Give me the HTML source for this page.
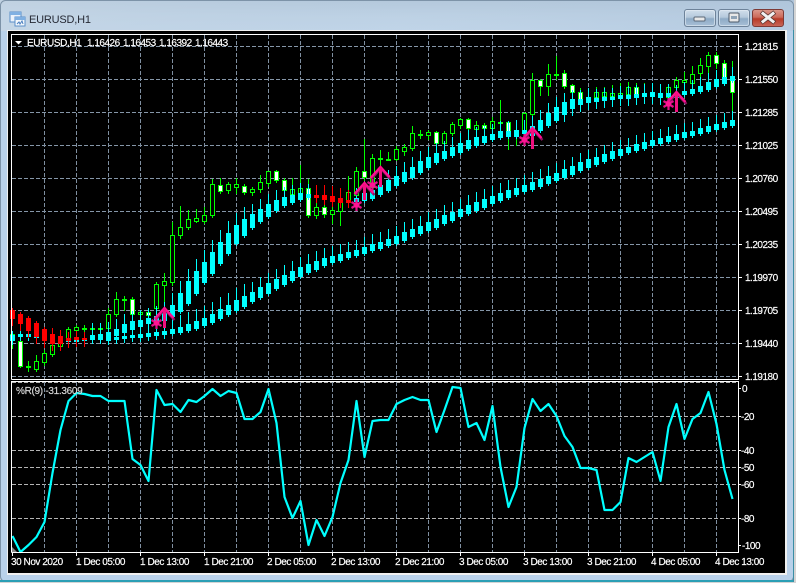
<!DOCTYPE html>
<html><head><meta charset="utf-8"><title>EURUSD,H1</title>
<style>
html,body{margin:0;padding:0;background:#d4d4d4;overflow:hidden}
#w{position:relative;width:796px;height:583px;overflow:hidden}
svg{position:absolute;left:0;top:0}
text{font-family:"Liberation Sans",sans-serif;font-size:10px;fill:#fff;stroke:#fff;stroke-width:.18px;letter-spacing:-.5px}
.t{letter-spacing:-.45px}
.c{shape-rendering:crispEdges}
</style></head><body><div id="w">
<svg width="796" height="583" viewBox="0 0 796 583">
<defs>
<linearGradient id="tb" x1="0" y1="0" x2="0" y2="1"><stop offset="0" stop-color="#b4c8db"/><stop offset=".5" stop-color="#bfd3e6"/><stop offset="1" stop-color="#c3d7eb"/></linearGradient>
<linearGradient id="tb2" x1="0" y1="0" x2="1" y2="0"><stop offset="0" stop-color="#c6d6e5" stop-opacity=".7"/><stop offset=".5" stop-color="#b5cadd" stop-opacity=".2"/><stop offset="1" stop-color="#a9c0d8" stop-opacity=".5"/></linearGradient>
<linearGradient id="bn" x1="0" y1="0" x2="0" y2="1"><stop offset="0" stop-color="#d3e0ec"/><stop offset=".45" stop-color="#b5c9dc"/><stop offset=".55" stop-color="#8fabc6"/><stop offset="1" stop-color="#a9c1d8"/></linearGradient>
<linearGradient id="cl" x1="0" y1="0" x2="0" y2="1"><stop offset="0" stop-color="#dc9a8e"/><stop offset=".45" stop-color="#cc6a5a"/><stop offset=".55" stop-color="#b83a28"/><stop offset="1" stop-color="#c9685a"/></linearGradient>
</defs>
<!-- frame -->
<rect x="0" y="0" width="794" height="582" rx="5" fill="#b9d1ea"/>
<rect x="0" y="0" width="794" height="31" fill="url(#tb)"/>
<rect x="0" y="0" width="794" height="31" fill="url(#tb2)"/>
<rect x=".5" y=".5" width="793" height="581" rx="5" fill="none" stroke="#7d93a8" stroke-width="1"/>
<rect x="0" y="580" width="794" height="2" fill="#2b9fb5"/>
<rect x="793" y="30" width="1" height="552" fill="#3a8ea5"/>
<rect x="7" y="30" width="780" height="545" fill="#f0f0f0"/>
<rect x="8" y="31" width="777" height="542" fill="#000"/>
<!-- icon -->
<g class="c">
<rect x="10" y="12" width="11" height="10" fill="#eaf2fb" stroke="#5b8fc8"/>
<rect x="10" y="12" width="11" height="3" fill="#7fb0e2"/>
<rect x="15" y="17" width="10" height="9" fill="#f4f8fc" stroke="#5b8fc8"/>
<rect x="15" y="17" width="10" height="3" fill="#7fb0e2"/>
</g>
<path d="M17 24l2-2 1 2 2-3 1 3" fill="none" stroke="#4a7fc0" stroke-width="1"/>
<text x="29" y="23" style="font-size:11px;letter-spacing:-.2px;fill:#262a35;stroke:none">EURUSD,H1</text>
<!-- buttons -->
<rect x="684.5" y="9.5" width="31" height="17" rx="2.5" fill="url(#bn)" stroke="#6d8299"/>
<rect x="685.5" y="10.5" width="29" height="15" rx="2" fill="none" stroke="#e4edf5" stroke-opacity=".6"/>
<rect x="694" y="17" width="11" height="4" rx="1" fill="#e8e8e8" stroke="#5c6877" stroke-width="1"/>
<rect x="718.5" y="9.5" width="31" height="17" rx="2.5" fill="url(#bn)" stroke="#6d8299"/>
<rect x="719.5" y="10.5" width="29" height="15" rx="2" fill="none" stroke="#e4edf5" stroke-opacity=".6"/>
<rect x="729" y="13" width="10" height="9" rx="1" fill="#e8e8e8" stroke="#4d5a6a" stroke-width="1"/>
<rect x="731" y="16" width="6" height="3" fill="#8fa3b6"/>
<rect x="752.5" y="9.5" width="31" height="17" rx="2.5" fill="url(#cl)" stroke="#7d3a36"/>
<path d="M763 13.5l10 8M773 13.5l-10 8" stroke="#5a3530" stroke-width="4.5" stroke-linecap="square"/>
<path d="M763 13.5l10 8M773 13.5l-10 8" stroke="#f2f2f2" stroke-width="3" stroke-linecap="square"/>
<!-- grid -->
<g id="grid" class="c" fill="none" stroke-width="1" stroke-dasharray="4 2"></g>
<!-- candles -->
<g id="cs" class="c"></g>
<!-- wpr -->
<polygon points="12,547 17,552 12,552" fill="#8a8a8a"/>
<polyline id="wpr" fill="none" stroke="#00ffff" stroke-width="2.2" stroke-linejoin="round"/>
<!-- arrows -->
<g id="ar"></g>
<!-- frames -->
<g class="c" fill="none" stroke="#fff" stroke-width="1">
<path d="M11.5 379.5V34.5H738.5V379.5H11.5"/>
<path d="M11.5 552.5V381.5H738.5V552.5H11.5"/>
<path d="M738 46.5h4M738 79.5h4M738 112.5h4M738 145.5h4M738 178.5h4M738 211.5h4M738 244.5h4M738 277.5h4M738 310.5h4M738 343.5h4M738 376.5h4"/>
<path d="M738 388.5h3M738 416.5h3M738 450.5h3M738 467.5h3M738 484.5h3M738 518.5h3M738 545.5h3"/>
<path d="M12.5 552v4M76.5 552v4M140.5 552v4M204.5 552v4M268.5 552v4M332.5 552v4M396.5 552v4M460.5 552v4M524.5 552v4M588.5 552v4M652.5 552v4M716.5 552v4"/>
</g>
<polygon points="15,41 22,41 18.5,44.5" fill="#fff"/>
<!-- header -->
<text x="27" y="46" style="letter-spacing:-.38px">EURUSD,H1</text>
<text x="87" y="46">1.16426</text><text x="123" y="46">1.16453</text><text x="159" y="46">1.16392</text><text x="195" y="46">1.16443</text>
<text x="16" y="394" style="fill:#d8d8d8;stroke:#d8d8d8;letter-spacing:-.3px">%R(9) -31.3609</text>
<!-- price axis -->
<text x="745" y="50">1.21815</text><text x="745" y="83">1.21550</text><text x="745" y="116">1.21285</text><text x="745" y="149">1.21025</text><text x="745" y="182">1.20760</text><text x="745" y="215">1.20495</text><text x="745" y="248">1.20235</text><text x="745" y="281">1.19970</text><text x="745" y="314">1.19705</text><text x="745" y="347">1.19440</text><text x="745" y="380">1.19180</text>
<text x="742" y="392">0</text><text x="741" y="420">-20</text><text x="741" y="454">-40</text><text x="741" y="471">-50</text><text x="741" y="488">-60</text><text x="741" y="522">-80</text><text x="742" y="549">-100</text>
<!-- time axis -->
<g class="tm">
<text class="t" x="11" y="565">30 Nov 2020</text>
<text class="t" x="76" y="565">1 Dec 05:00</text>
<text class="t" x="140" y="565">1 Dec 13:00</text>
<text class="t" x="204" y="565">1 Dec 21:00</text>
<text class="t" x="267" y="565">2 Dec 05:00</text>
<text class="t" x="331" y="565">2 Dec 13:00</text>
<text class="t" x="395" y="565">2 Dec 21:00</text>
<text class="t" x="459" y="565">3 Dec 05:00</text>
<text class="t" x="523" y="565">3 Dec 13:00</text>
<text class="t" x="587" y="565">3 Dec 21:00</text>
<text class="t" x="651" y="565">4 Dec 05:00</text>
<text class="t" x="715" y="565">4 Dec 13:00</text>
</g>
</svg>
</div>
<script>
var NS="http://www.w3.org/2000/svg";
function el(p,n,a){var e=document.createElementNS(NS,n);for(var k in a)e.setAttribute(k,a[k]);p.appendChild(e);return e}
var grid=document.getElementById('grid'),cs=document.getElementById('cs'),ar=document.getElementById('ar');
[46,79,112,145,178,211,244,277,310,343,376].forEach(function(y){el(grid,'path',{d:'M12 '+(y+.5)+'H738',stroke:'#8596a8'})});
[382,416,450,467,484,518].forEach(function(y){el(grid,'path',{d:'M12 '+(y+.5)+'H738',stroke:'#b4b4b4'})});
for(var x=44;x<=716;x+=32){el(grid,'path',{d:'M'+(x+.5)+' 35V379',stroke:'#7f8fa0'});el(grid,'path',{d:'M'+(x+.5)+' 382V552',stroke:'#7f8fa0'})}
/* main candles: wickTop, bodyTop, bodyBot, wickBot, white(1) */
var M=[[334,334,340,348,0],[341,341,366,367,1],[361,366,366,371,0],[355,361,369,371,0],[350,353,362,365,0],[335,345,354,356,0],[332,336,346,348,0],[327,329,338,342,0],[325,327,330,331,0],[325,328,328,332,0],[325,328,328,332,0],[326,328,328,335,0],[308,314,328,330,0],[292,299,314,316,0],[296,299,299,310,0],[297,299,314,316,1],[310,312,314,316,0],[309,312,315,318,1],[282,284,308,312,0],[273,281,285,303,0],[222,235,282,285,0],[206,227,235,238,0],[210,219,227,229,0],[209,218,221,222,0],[207,215,221,223,0],[179,184,215,217,0],[178,185,191,193,1],[182,184,190,193,0],[178,184,187,193,0],[184,186,192,194,1],[187,189,192,195,0],[175,182,189,192,0],[171,171,183,186,0],[170,171,180,182,1],[178,180,190,193,1],[178,189,194,197,0],[165,188,194,200,0],[179,188,215,217,1],[197,207,215,218,0],[196,207,214,217,1],[200,210,214,223,0],[191,201,211,225,0],[176,192,201,203,0],[167,171,195,199,0],[139,171,177,180,1],[154,158,187,190,0],[150,158,158,168,0],[152,159,159,160,0],[146,149,159,160,0],[144,147,151,155,0],[126,133,148,150,0],[130,134,134,138,0],[130,132,135,139,0],[131,132,143,145,1],[131,133,143,145,0],[122,124,133,135,0],[118,119,125,128,0],[118,119,128,130,1],[121,125,129,131,0],[123,125,128,130,1],[117,121,128,130,0],[100,122,122,135,0],[122,122,136,149,1],[123,130,136,145,0],[112,113,133,137,0],[73,80,114,118,0],[79,80,86,95,1],[64,74,86,95,0],[56,74,74,79,0],[70,73,86,88,1],[84,85,92,95,1],[88,92,104,106,1],[88,97,102,104,0],[87,92,97,100,0],[87,92,96,98,0],[85,93,96,100,0],[83,93,96,99,0],[82,87,94,97,0],[83,87,95,97,1],[83,93,95,98,0],[87,93,95,98,0],[93,93,97,100,1],[85,87,97,100,0],[77,80,87,91,0],[72,80,82,92,0],[66,74,83,87,0],[58,65,73,78,0],[52,55,66,72,0],[52,55,63,68,1],[60,63,77,82,1],[61,76,92,120,1]];
/* upper channel candles */
var U=[[310,318],[314,323],[318,330],[323,336],[329,340],[334,343],[336,343],[338,340],[337,339],[338,339],[335,338],[334,339],[332,339],[329,335],[324,332],[321,329],[320,326],[318,323],[316,324],[312,320],[305,316],[293,311],[281,303],[271,293],[262,282],[252,273],[242,263],[233,253],[225,243],[219,235],[214,227],[209,221],[204,216],[200,210],[197,205],[195,202],[193,199],[194,197],[195,197],[195,199],[196,201],[198,202],[200,202],[198,201],[193,200],[190,198],[185,194],[180,190],[176,185],[172,181],[167,177],[161,172],[157,167],[153,162],[151,158],[147,155],[143,152],[140,148],[137,145],[136,142],[134,139],[131,137],[131,136],[130,136],[130,133],[126,135],[120,130],[113,125],[107,120],[102,114],[99,108],[99,104],[97,102],[98,101],[97,100],[97,99],[95,98],[95,98],[94,97],[93,96],[92,96],[93,97],[93,96],[94,97],[91,94],[89,93],[86,91],[82,89],[79,86],[77,83],[76,80]];
var L=[[335,340],[334,336],[334,336],[335,337],[337,339],[337,339],[338,340],[338,341],[338,341],[338,340],[337,339],[337,339],[337,340],[337,339],[336,338],[335,337],[334,337],[333,336],[332,335],[331,334],[329,333],[327,332],[324,330],[321,328],[318,325],[314,322],[309,318],[305,314],[300,310],[296,306],[292,301],[287,297],[283,293],[279,288],[275,284],[271,280],[267,276],[264,272],[261,269],[258,265],[256,262],[254,260],[252,257],[250,255],[247,253],[244,250],[242,248],[239,245],[236,243],[232,240],[229,236],[226,233],[222,230],[219,227],[215,223],[212,220],[209,216],[205,213],[202,210],[199,207],[196,203],[193,200],[190,197],[188,194],[185,191],[182,189],[179,186],[176,183],[173,180],[169,177],[166,174],[162,170],[159,167],[157,164],[154,161],[151,158],[149,155],[147,152],[144,150],[142,148],[140,145],[138,143],[136,141],[134,139],[132,137],[131,135],[128,133],[126,131],[124,129],[122,127],[120,125]];
function rc(x,y,w,h,f){el(cs,'rect',{x:x,y:y,width:w,height:h,fill:f})}
M.forEach(function(c,i){var x=12+8*i,G='#00ff00';
 rc(x,c[0],1,c[3]-c[0]+1,G);
 if(c[1]==c[2]){rc(x-2,c[1],5,2,G)}
 else{rc(x-2,c[1],5,c[2]-c[1]+1,G);rc(x-1,c[1]+1,3,c[2]-c[1]-1,c[4]?'#fff':'#000')}
});
L.forEach(function(c,i){var x=12+8*i,a=i<10?4:i<20?14:x<250?12:x<560?10:9,b=i<10?5:i<20?5:3;
 rc(x,c[0]-a,1,c[1]-c[0]+a+b,'#00ffff');rc(x-2,c[0],5,c[1]-c[0]+1,'#00ffff')});
U.forEach(function(c,i){var x=12+8*i,red=(i<=9||(i>=38&&i<=42)),k=red?'#ff0000':'#00ffff';
 var a=i<5?2:i<10?6:i<20?10:x<250?12:x<560?10:9, b=i<10?8:red?6:x<150?5:x<560?3:x<680?8:3;
 rc(x,c[0]-a,1,c[1]-c[0]+a+b,k);rc(x-2,c[0],5,c[1]-c[0]+1,k)});
/* wpr */
var W=[536,552,545,537,522,473,430,401,393,394,396,396,401,401,401,459,465,481,390,405,404,412,400,402,396,389,396,391,393,419,419,412,389,423,497,518,501,545,520,536,517,483,460,401,457,421,420,420,404,400,397,400,400,432,410,387,388,427,423,440,406,467,507,487,428,399,411,404,416,436,447,468,468,470,510,510,502,458,462,457,452,481,427,404,439,419,413,392,424,470,499];
document.getElementById('wpr').setAttribute('points',W.map(function(y,i){return (12.5+8*i)+','+y}).join(' '));
/* arrows */
[[164,308,328],[364,183,200],[380,167,187],[532,128,149],[676,92,112]].forEach(function(a){
 var x=a[0]+.5,y=a[1],b=a[2];
 el(ar,'path',{d:'M'+(x-9)+' '+(y+12)+'L'+x+' '+(y+1.5)+'L'+(x+10)+' '+(y+12),fill:'none',stroke:'#8f1060','stroke-width':2.4});
 el(ar,'path',{d:'M'+(x-10)+' '+(y+11)+'L'+x+' '+y+'L'+(x+9)+' '+(y+10),fill:'none',stroke:'#ff1090','stroke-width':2.4});
 el(ar,'rect',{x:x-1.5,y:y+1,width:3,height:b-y-1,fill:'#f0107f'});
});
[[156,323],[356,205],[372,185],[524,140],[668,104]].forEach(function(s){
 var x=s[0]+.5,y=s[1];
 el(ar,'path',{d:'M'+x+' '+(y-6)+'V'+(y+6)+'M'+(x-5)+' '+(y-3)+'L'+(x+5)+' '+(y+3)+'M'+(x+5)+' '+(y-3)+'L'+(x-5)+' '+(y+3),stroke:'#e0108a','stroke-width':2.2,fill:'none'});
 el(ar,'circle',{cx:x,cy:y,r:2.8,fill:'#ff1493'});
});
</script>
</body></html>
